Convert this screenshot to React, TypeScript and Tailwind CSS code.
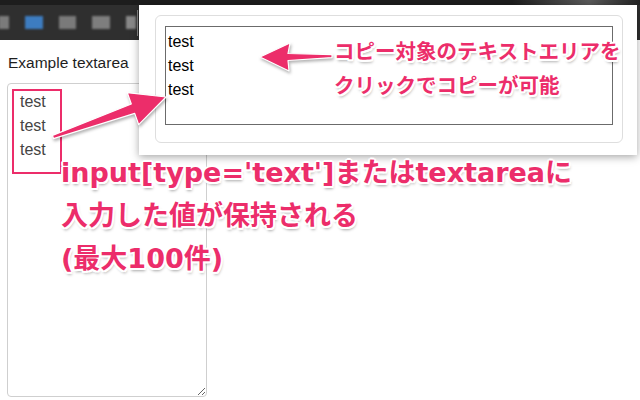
import React from 'react';

// Blurred toolbar items of the browser chrome behind the popup.
const toolbarBlocks = [
  { w: 'w-[10px]', c: 'bg-[#7b7b7b]' },
  { w: 'w-[18px]', c: 'bg-[#3d7cc0]' },
  { w: 'w-[17px]', c: 'bg-[#7a7a7a]' },
  { w: 'w-[18px]', c: 'bg-[#7e7e7e]' },
  { w: 'w-[10px]', c: 'bg-[#888]' },
];

const outline =
  '[text-shadow:-1.5px_-1.5px_0_#fff,1.5px_-1.5px_0_#fff,-1.5px_1.5px_0_#fff,1.5px_1.5px_0_#fff,0_-2px_0_#fff,0_2px_0_#fff,-2px_0_0_#fff,2px_0_0_#fff,1px_3px_3px_rgba(0,0,0,0.35)]';

function Arrows() {
  return (
    <svg
      className="pointer-events-none absolute left-0 top-0 [filter:drop-shadow(1px_2px_1.5px_rgba(0,0,0,0.3))]"
      width="640"
      height="400"
      viewBox="0 0 640 400">
      <polygon
        points="52.5,135.4 131.3,104 127.3,92.7 166,97 138.7,124.7 134.7,113.4 53.5,138.6"
        fill="#ec2d6a"
        stroke="#fff"
        strokeWidth="1.2"
        strokeLinejoin="round"
      />
      <polygon
        points="260,57 290,43 288,53.5 332,54.6 332,57.6 288,60.5 289,71"
        fill="#ec2d6a"
        stroke="#fff"
        strokeWidth="1.2"
        strokeLinejoin="round"
      />
    </svg>
  );
}

export default function App() {
  return (
    <div className="relative h-[400px] w-[640px] overflow-hidden bg-white font-['Liberation_Sans',Arial,sans-serif]">
      {/* browser chrome */}
      <header className="flex h-10 flex-col bg-[#2f2f2f]">
        <div className="h-[5px] bg-[linear-gradient(90deg,#1d1d1d_0%,#1d1d1d_80%,#5a5a5a_92%,#222_100%)]" />
        <div className="flex flex-1 items-center">
          <div className="flex items-center gap-[16px] blur-[1px]">
            {toolbarBlocks.map((b, i) => (
              <div key={i} className={`h-[13px] ${b.w} ${b.c} ${i === 0 ? '-ml-px' : ''}`} />
            ))}
          </div>
          <div className="ml-[1px] h-[26px] w-px bg-[#8a8a8a]" />
        </div>
      </header>

      {/* page content */}
      <main className="px-[7px]">
        <label className="mt-[11px] block pl-px text-[15.5px] leading-6 text-[#1e1e1e]">
          Example textarea
        </label>
        <textarea
          className="mt-2 block h-[314px] w-[200px] rounded-[4px] border border-[#cfcfcf] px-3 py-[6px] font-['Liberation_Sans',Arial,sans-serif] text-[16px] leading-6 text-[#444] outline-none"
          defaultValue={'test\ntest\ntest'}
        />
      </main>

      {/* extension popup */}
      <div className="absolute left-[139px] top-[5px] h-[150px] w-[498px] bg-white pl-4 pr-[14px] pt-[10px] shadow-[0_2px_8px_rgba(0,0,0,0.35)]">
        <div className="h-[128px] rounded-[6px] border border-[#dedede] px-[9px] pt-[10px]">
          <textarea
            className="block h-[99px] w-full resize-none border border-[#6b6b6b] px-[2px] pt-[3px] font-['Liberation_Sans',Arial,sans-serif] text-[16px] leading-6 text-black outline-none"
            defaultValue={'test\ntest\ntest'}
          />
        </div>
      </div>

      {/* annotations */}
      <div className="pointer-events-none absolute left-[12px] top-[89px] h-[85px] w-[50px] border-2 border-[#ec2d6a]" />
      <Arrows />
      <div
        className={`absolute left-[334px] top-[35px] font-['DejaVu_Sans','Noto_Sans_CJK_JP',sans-serif] text-[20.5px] font-bold leading-[34px] whitespace-nowrap text-[#ec2d6a] ${outline}`}>
        <div>コピー対象のテキストエリアを</div>
        <div>クリックでコピーが可能</div>
      </div>
      <div
        className={`absolute left-[61px] top-[151px] font-['DejaVu_Sans','Noto_Sans_CJK_JP',sans-serif] text-[27px] font-bold leading-[43px] whitespace-nowrap text-[#ec2d6a] ${outline}`}>
        <div>input[type='text']またはtextareaに</div>
        <div>入力した値が保持される</div>
        <div>(最大100件)</div>
      </div>
    </div>
  );
}
